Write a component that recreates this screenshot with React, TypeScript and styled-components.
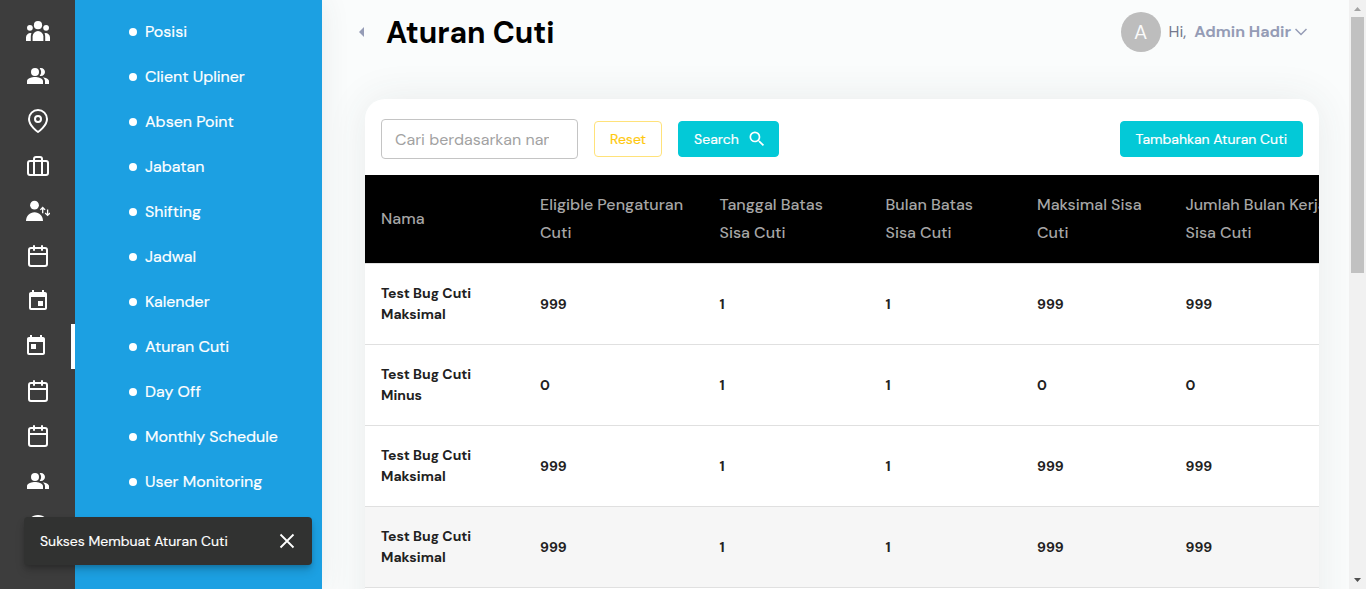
import React from 'react';
import styled, { createGlobalStyle } from 'styled-components';
import { MdPeopleAlt, MdEvent, MdToday, MdSearch } from 'react-icons/md';
import { FiMapPin, FiBriefcase, FiCalendar, FiClock } from 'react-icons/fi';

const GlobalStyle = createGlobalStyle`
  *, *::before, *::after { box-sizing: border-box; }
  body {
    margin: 0;
    overflow: hidden;
    font-family: "DM Sans", Inter, "Liberation Sans", sans-serif;
    font-size: 16px;
    color: #212121;
  }
`;

const Page = styled.div`
  display: flex;
  height: 589px;
  overflow: hidden;
  background: #fafcfc;
`;

const IconRail = styled.nav`
  display: flex;
  flex-direction: column;
  flex: 0 0 75px;
  padding-top: 9px;
  background: #3d3d3d;
  color: #fff;
  z-index: 1;
`;

const RailItem = styled.div<{ $active?: boolean }>`
  display: flex;
  flex: 0 0 45px;
  justify-content: center;
  padding: 10px 0 0 1px;
  border-right: ${(p) => (p.$active ? '4px solid #fff' : 'none')};

  svg { width: 24px; height: 24px; flex: none; }
`;

const Menu = styled.nav`
  display: flex;
  flex-direction: column;
  flex: 0 0 247px;
  padding: 9px 0 0 54px;
  background: #1ca0e2;
  box-shadow: 0 0 28px rgba(60, 70, 70, 0.09);
`;

const MenuItem = styled.a`
  display: flex;
  flex: 0 0 45px;
  align-items: center;
  gap: 8px;
  color: #fff;
  -webkit-text-stroke: 0.2px #fff;

  &::before {
    content: '';
    width: 8px;
    height: 8px;
    margin-top: 1px;
    border-radius: 50%;
    background: #fff;
  }
`;

const Main = styled.main`
  display: flex;
  flex: 1;
  flex-direction: column;
  min-width: 0;
  padding: 0 30px 0 37px;
`;

const Header = styled.header`
  display: flex;
  align-items: center;
  flex: 0 0 64px;
`;

const CollapseMark = styled.span`
  width: 5px;
  border: 5px solid transparent;
  border-left: 0;
  border-right-color: #959cb6;
`;

const Title = styled.h1`
  flex: 1;
  margin: 2px 0 0 22px;
  color: #000;
  font-size: 30px;
  font-weight: 700;
  line-height: 40px;
`;

const Account = styled.div`
  display: flex;
  align-items: center;
  padding-right: 12px;
  color: #74788d;

  svg { margin-left: 4px; }
`;

const Avatar = styled.span`
  display: flex;
  align-items: center;
  justify-content: center;
  width: 40px;
  height: 40px;
  margin-right: 8px;
  border-radius: 50%;
  background: #bdbdbd;
  color: #fafafa;
  font-size: 20px;
`;

const Greeting = styled.span`
  padding-bottom: 2px;
`;

const AccountName = styled.strong`
  margin-left: 8px;
  color: #959cb6;
  font-weight: 700;
`;

const Card = styled.section`
  flex: 0 0 560px;
  width: 954px;
  margin: 35px 0 0 6px;
  border-radius: 20px;
  background: #fff;
  box-shadow: 0 0 40px rgba(60, 70, 70, 0.09);
`;

const Toolbar = styled.div`
  display: flex;
  align-items: center;
  gap: 16px;
  height: 76px;
  padding: 4px 16px 0;
`;

const SearchField = styled.input`
  width: 197px;
  height: 40px;
  padding: 1px 28px 0 13px;
  border: 1px solid #c4c4c4;
  border-radius: 4px;
  background: #fff;
  font: inherit;

  &::placeholder { color: #a2a2a2; opacity: 1; }
`;

const Button = styled.button<{ $outlined?: boolean; $end?: boolean }>`
  display: flex;
  align-items: center;
  justify-content: center;
  gap: 8px;
  height: 36px;
  margin-left: ${(p) => (p.$end ? 'auto' : '0')};
  padding: 0 15px;
  border: 1px solid ${(p) => (p.$outlined ? '#ffe27a' : '#03c9d7')};
  border-radius: 4px;
  background: ${(p) => (p.$outlined ? '#fff' : '#03c9d7')};
  color: ${(p) => (p.$outlined ? '#fec90f' : '#fff')};
  font-family: inherit;
  font-size: 14px;
  -webkit-text-stroke: 0.2px currentColor;
  white-space: nowrap;

  svg { width: 20px; height: 20px; margin: -1px -4px 0 0; }
`;

const Table = styled.div`
  width: 100%;
  overflow: hidden;
`;

const TableRow = styled.div<{ $hover?: boolean }>`
  display: grid;
  grid-template-columns: 159px 179.5px 166px 151.5px 148.5px 190px;
  align-items: center;
  height: 81px;
  border-bottom: 1px solid #e0e0e0;
  background: ${(p) => (p.$hover ? '#f6f6f6' : '#fff')};
`;

const HeadRow = styled(TableRow)`
  height: 89px;
  background: #000;
`;

const HeadCell = styled.div`
  padding-left: 16px;
  color: #a6a6a6;
  font-weight: 500;
  line-height: 28px;
  white-space: pre;
`;

const Cell = styled.div`
  padding-left: 16px;
  font-size: 14px;
  font-weight: 700;
  line-height: 21px;
  white-space: pre-line;
`;

const ScrollTrack = styled.div`
  display: flex;
  flex: 0 0 17px;
  flex-direction: column;
  align-items: center;
  background: #f1f1f1;
`;

const ScrollArrow = styled.svg`
  flex: none;
  width: 17px;
  height: 17px;
`;

const ScrollThumb = styled.div`
  width: 13px;
  height: 256px;
  margin-bottom: auto;
  background: #c1c1c1;
`;

const Snackbar = styled.div`
  position: absolute;
  z-index: 2;
  top: 517px;
  left: 24px;
  display: flex;
  align-items: center;
  justify-content: space-between;
  width: 288px;
  height: 48px;
  padding: 0 16px;
  border-radius: 4px;
  background: #313231;
  color: #fff;
  font-size: 14px;
  -webkit-text-stroke: 0.15px #fff;
  box-shadow: 0 3px 5px -1px rgba(0, 0, 0, 0.2), 0 6px 10px rgba(0, 0, 0, 0.14);
`;

const TeamIcon = () => (
  <svg viewBox="0 0 24 24" fill="currentColor">
    <circle cx="12" cy="6.2" r="4.1" />
    <circle cx="3.9" cy="8.8" r="2.9" />
    <circle cx="20.1" cy="8.8" r="2.9" />
    <path d="M6.6 21.9v-4.4a5.4 5.4 0 0 1 10.8 0v4.4z" />
    <path d="M0 21.9v-3.6a4.2 4.2 0 0 1 5.5-4 7.5 7.5 0 0 0-.7 3.2v4.4z" />
    <path d="M24 21.9v-3.6a4.2 4.2 0 0 0-5.5-4 7.5 7.5 0 0 1 .7 3.2v4.4z" />
  </svg>
);

const ShiftIcon = () => (
  <svg viewBox="0 0 24 24" fill="currentColor">
    <circle cx="8.5" cy="6.2" r="4.4" />
    <path d="M0 22c0-5 3.8-8.7 8.5-8.7S17 17 17 22z" />
    <g fill="none" stroke="currentColor" strokeWidth="1.3">
      <path d="M16.7 14.3V8.8M14.3 10.9l2.4-2.4 2.4 2.4M21.6 10.6v5.8M19.2 14l2.4 2.4L24 14" />
    </g>
  </svg>
);

const sections = [
  { label: 'Posisi', icon: <TeamIcon /> },
  { label: 'Client Upliner', icon: <MdPeopleAlt /> },
  { label: 'Absen Point', icon: <FiMapPin /> },
  { label: 'Jabatan', icon: <FiBriefcase /> },
  { label: 'Shifting', icon: <ShiftIcon /> },
  { label: 'Jadwal', icon: <FiCalendar /> },
  { label: 'Kalender', icon: <MdEvent /> },
  { label: 'Aturan Cuti', icon: <MdToday />, active: true },
  { label: 'Day Off', icon: <FiCalendar /> },
  { label: 'Monthly Schedule', icon: <FiCalendar /> },
  { label: 'User Monitoring', icon: <MdPeopleAlt /> },
];

const columns = [
  'Nama',
  'Eligible Pengaturan\nCuti',
  'Tanggal Batas\nSisa Cuti',
  'Bulan Batas\nSisa Cuti',
  'Maksimal Sisa\nCuti',
  'Jumlah Bulan Kerja\nSisa Cuti',
];

const rows = [
  ['Test Bug Cuti\nMaksimal', '999', '1', '1', '999', '999'],
  ['Test Bug Cuti\nMinus', '0', '1', '1', '0', '0'],
  ['Test Bug Cuti\nMaksimal', '999', '1', '1', '999', '999'],
  ['Test Bug Cuti\nMaksimal', '999', '1', '1', '999', '999'],
];

export default function App() {
  return (
    <Page>
      <GlobalStyle />
      <IconRail>
        {sections.map((s) => (
          <RailItem key={s.label} $active={s.active}>{s.icon}</RailItem>
        ))}
        <RailItem><FiClock /></RailItem>
      </IconRail>
      <Menu>
        {sections.map((s) => <MenuItem key={s.label}>{s.label}</MenuItem>)}
      </Menu>
      <Main>
        <Header>
          <CollapseMark />
          <Title>Aturan Cuti</Title>
          <Account>
            <Avatar>A</Avatar>
            <Greeting>
              Hi,
              <AccountName>Admin Hadir</AccountName>
            </Greeting>
            <svg width="12" height="8" viewBox="0 0 12 8" fill="none" stroke="#959cb6" strokeWidth="1.5">
              <path d="M.5 1 6 6.5 11.5 1" />
            </svg>
          </Account>
        </Header>
        <Card>
          <Toolbar>
            <SearchField placeholder="Cari berdasarkan nama" />
            <Button $outlined>Reset</Button>
            <Button>Search <MdSearch /></Button>
            <Button $end>Tambahkan Aturan Cuti</Button>
          </Toolbar>
          <Table>
            <HeadRow>
              {columns.map((c) => <HeadCell key={c}>{c}</HeadCell>)}
            </HeadRow>
            {rows.map((row, i) => (
              <TableRow key={i} $hover={i === 3}>
                {row.map((value, j) => <Cell key={j}>{value}</Cell>)}
              </TableRow>
            ))}
          </Table>
        </Card>
      </Main>
      <ScrollTrack>
        <ScrollArrow viewBox="0 0 17 17"><path d="M5 11 8.5 7 12 11z" fill="#a3a3a3" /></ScrollArrow>
        <ScrollThumb />
        <ScrollArrow viewBox="0 0 17 17"><path d="M5 6 8.5 10 12 6z" fill="#505050" /></ScrollArrow>
      </ScrollTrack>
      <Snackbar>
        Sukses Membuat Aturan Cuti
        <svg width="18" height="18" viewBox="0 0 18 18" stroke="#fff" strokeWidth="1.8">
          <path d="M2.5 2.5 15.5 15.5M15.5 2.5 2.5 15.5" />
        </svg>
      </Snackbar>
    </Page>
  );
}
